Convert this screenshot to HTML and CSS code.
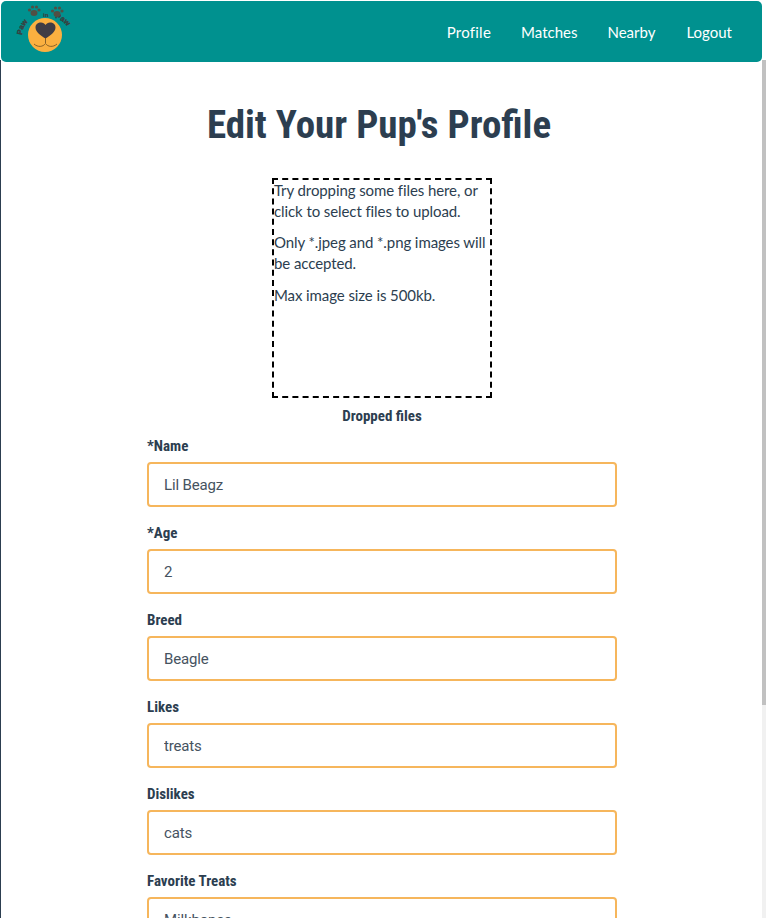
FILE: index.html
```html
<!DOCTYPE html>
<html lang="en">
<head>
<meta charset="utf-8">
<title>Edit Your Pup's Profile</title>
<link rel="stylesheet" href="styles.css">
</head>
<body>
<div class="edge"></div>
<div class="scroll"><div class="thumb"></div></div>
<nav class="nav">
  <a class="logo" href="#" aria-label="Paw in Paw">
    <svg width="60" height="56" viewBox="16 1 60 56">
      <circle cx="45" cy="35" r="17" fill="#fbb040"/>
      <path d="M45.500 38.500C41 36 35.500 32 35.500 27.500 35.500 24 38 22.500 41 22.500 43 22.500 44.500 23.500 45.500 25 46.500 23.500 48 22.500 50 22.500 53 22.500 55.500 24 55.500 27.500 55.500 32 50 36 45.500 38.500Z" fill="#403d45"/>
      <path d="M45.500 38V43M34 44C38 47.500 43 47 45.500 43.500 48 47 53 47.500 57 44" fill="none" stroke="#6d4c1f" stroke-width="0.8"/>
      <path id="arcL" d="M22 35C22.500 28 25 24 31 19" fill="none"/>
      <path id="arcR" d="M55 18C62 20 68 25 71.500 34" fill="none"/>
      <text class="logotext"><textPath href="#arcL">Paw</textPath></text>
      <text class="logotext"><textPath href="#arcR">Paw</textPath></text>
      <text class="logotext small" x="43" y="16.500">in</text>
      <g class="paw">
        <ellipse cx="34" cy="13" rx="3.500" ry="3"/><circle cx="29.500" cy="10" r="1.600"/><circle cx="32.500" cy="7" r="1.600"/><circle cx="36.500" cy="7" r="1.600"/><circle cx="39" cy="10" r="1.600"/>
        <ellipse cx="57" cy="14" rx="3.500" ry="3"/><circle cx="52.500" cy="11" r="1.600"/><circle cx="55.500" cy="8" r="1.600"/><circle cx="59.500" cy="8" r="1.600"/><circle cx="62" cy="11" r="1.600"/>
      </g>
    </svg>
  </a>
  <ul class="links">
    <li><a class="wide" href="#">Profile</a></li>
    <li><a href="#">Matches</a></li>
    <li><a href="#">Nearby</a></li>
    <li class="last"><a href="#">Logout</a></li>
  </ul>
</nav>
<main class="main">
  <h1 class="title">Edit Your Pup's Profile</h1>
  <div class="drop">
    <p>Try dropping some files here, or click to select files to upload.</p>
    <p>Only *.jpeg and *.png images will be accepted.</p>
    <p>Max image size is 500kb.</p>
  </div>
  <h4 class="dropped">Dropped files</h4>
  <form class="form">
    <div class="field"><label>*Name</label><input value="Lil Beagz"></div>
    <div class="field"><label>*Age</label><input value="2"></div>
    <div class="field"><label>Breed</label><input value="Beagle"></div>
    <div class="field"><label>Likes</label><input value="treats"></div>
    <div class="field"><label>Dislikes</label><input value="cats"></div>
    <div class="field"><label>Favorite Treats</label><input value="Milkbones"></div>
  </form>
</main>
</body>
</html>
```
FILE: styles.css
```css
* { box-sizing: border-box; }
html, body { margin: 0; height: 918px; overflow: hidden; background: #fff; }
body { font-family: Lato, sans-serif; font-size: 15px; color: #2c3e50; padding-top: 1px; }
.edge { position: absolute; left: 0; top: 60px; bottom: 0; width: 1px; background: #2c3e50; }
.scroll { position: absolute; right: 0; top: 60px; bottom: 0; width: 4px; background: #f1f1f1; }
.thumb { height: 645px; background: #c1c1c1; }
.nav { position: relative; display: flex; align-items: center; justify-content: space-between; height: 61px; margin-right: 4px; margin-left: 1px; background: #00918f; border-radius: 5px; padding: 0 15px; }
.logo { display: block; align-self: flex-start; height: 56px; }
.logo svg { display: block; overflow: visible; }
.logotext { font-family: "Liberation Sans", sans-serif; font-size: 7.500px; font-weight: 700; fill: #39403f; stroke: #39403f; stroke-width: 0.4px; }
.logotext.small { font-size: 6px; stroke-width: 0.2px; }
.paw { fill: #514f44; }
.links { display: flex; list-style: none; margin: 0; padding: 0; }
.links a { display: block; padding: 0 15px; color: #fff; text-decoration: none; font-size: 15px; line-height: 22px; }
.links .wide { letter-spacing: 0.25px; }
.links .last { margin-left: 1px; }
.main { display: flex; flex-direction: column; align-items: center; padding-right: 2px; }
.title { margin: 40px 6px 0 0; font-family: "Roboto Condensed", Roboto, sans-serif; font-stretch: condensed; font-size: 39px; line-height: 46px; font-weight: 700; }
.drop { width: 220px; height: 220px; margin-top: 30px; border: 2px dashed #000; }
.drop p { margin: 0 0 10.400px; line-height: 21px; letter-spacing: -0.09px; }
.dropped { margin: 10px 0 0; font-family: "Roboto Condensed", Roboto, sans-serif; font-stretch: condensed; font-size: 15px; line-height: 17px; font-weight: 700; }
.form { width: 470px; margin-top: 13px; display: flex; flex-direction: column; gap: 18px; }
.field label { display: block; font-family: "Roboto Condensed", Roboto, sans-serif; font-stretch: condensed; font-size: 15px; line-height: 17px; font-weight: 700; margin-bottom: 7px; }
.field input { display: block; width: 100%; height: 45px; padding: 0 15px; border: 2px solid #f6b65c; border-radius: 4px; outline: none; background: #fff; font-family: Roboto, sans-serif; font-size: 15px; letter-spacing: -0.15px; color: #46535f; }
```
